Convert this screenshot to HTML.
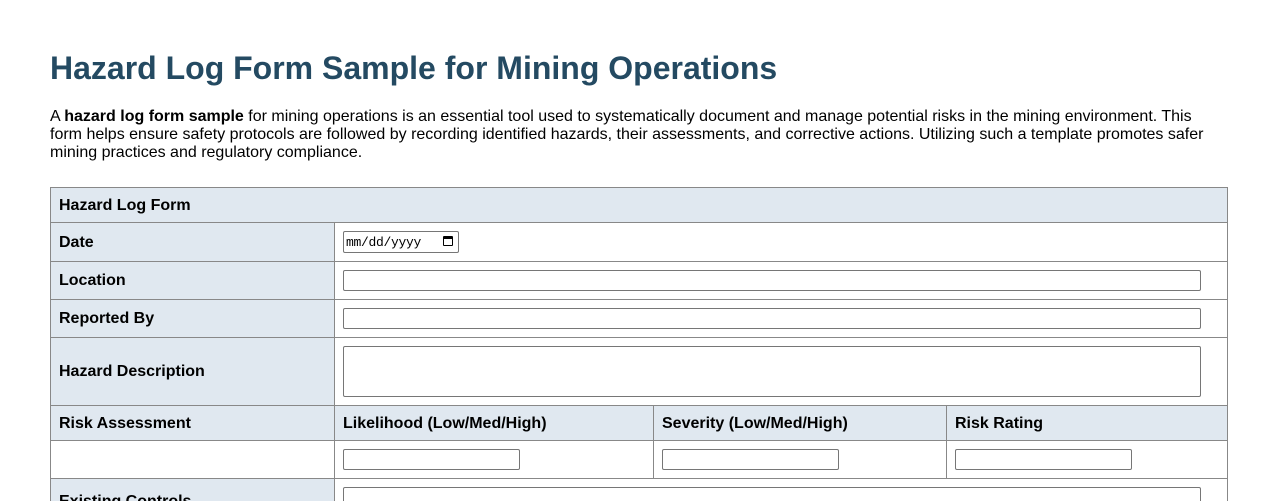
<!DOCTYPE html>
<html><head><meta charset="utf-8"><style>
html,body{margin:0;width:1278px;height:501px;overflow:hidden}
body{background:#fff;font-family:"Liberation Sans",Arial,sans-serif;position:relative}
h1{position:absolute;left:50px;top:48px;margin:0;font-size:32px;color:#244a62;font-weight:bold;line-height:40px}
p{position:absolute;left:50px;top:108px;width:1170px;margin:0;font-size:16px;line-height:18px;color:#000}
.c{position:absolute;box-sizing:border-box;border:1px solid #888;font-size:16px;font-weight:bold;color:#000}
.h{background:#e0e8f0}
.c span{position:absolute;left:8px}
.i{position:absolute;box-sizing:border-box;border:1px solid #767676;border-radius:2px;background:#fff}
</style></head><body>
<h1>Hazard Log Form Sample for Mining Operations</h1>
<p>A <b>hazard log form sample</b> for mining operations is an essential tool used to systematically document and manage potential risks in the mining environment. This form helps ensure safety protocols are followed by recording identified hazards, their assessments, and corrective actions. Utilizing such a template promotes safer mining practices and regulatory compliance.</p>

<div class="c h" style="left:50px;top:187px;width:1178px;height:36px"><span style="top:9px">Hazard Log Form</span></div>

<div class="c h" style="left:50px;top:222px;width:285px;height:40px"><span style="top:11px">Date</span></div>
<div class="c" style="left:334px;top:222px;width:894px;height:40px"></div>
<div class="i" style="left:343px;top:231px;width:116px;height:22px;font-family:'Liberation Mono',monospace;font-size:13px;padding:3px 0 0 2px;letter-spacing:-0.3px">mm/dd/yyyy<span style="position:absolute;right:5px;top:4px;width:10px;height:10px;border:1.5px solid #000;border-top-width:3px;border-radius:1px;box-sizing:border-box"></span></div>

<div class="c h" style="left:50px;top:261px;width:285px;height:39px"><span style="top:10px">Location</span></div>
<div class="c" style="left:334px;top:261px;width:894px;height:39px"></div>
<div class="i" style="left:343px;top:270px;width:858px;height:21px"></div>

<div class="c h" style="left:50px;top:299px;width:285px;height:39px"><span style="top:10px">Reported By</span></div>
<div class="c" style="left:334px;top:299px;width:894px;height:39px"></div>
<div class="i" style="left:343px;top:308px;width:858px;height:21px"></div>

<div class="c h" style="left:50px;top:337px;width:285px;height:69px"><span style="top:25px">Hazard Description</span></div>
<div class="c" style="left:334px;top:337px;width:894px;height:69px"></div>
<div class="i" style="left:343px;top:346px;width:858px;height:51px"></div>

<div class="c h" style="left:50px;top:405px;width:285px;height:36px"><span style="top:9px">Risk Assessment</span></div>
<div class="c h" style="left:334px;top:405px;width:320px;height:36px"><span style="top:9px">Likelihood (Low/Med/High)</span></div>
<div class="c h" style="left:653px;top:405px;width:294px;height:36px"><span style="top:9px">Severity (Low/Med/High)</span></div>
<div class="c h" style="left:946px;top:405px;width:282px;height:36px"><span style="top:9px">Risk Rating</span></div>

<div class="c" style="left:50px;top:440px;width:285px;height:39px"></div>
<div class="c" style="left:334px;top:440px;width:320px;height:39px"></div>
<div class="c" style="left:653px;top:440px;width:294px;height:39px"></div>
<div class="c" style="left:946px;top:440px;width:282px;height:39px"></div>
<div class="i" style="left:343px;top:449px;width:177px;height:21px"></div>
<div class="i" style="left:662px;top:449px;width:177px;height:21px"></div>
<div class="i" style="left:955px;top:449px;width:177px;height:21px"></div>

<div class="c h" style="left:50px;top:478px;width:285px;height:60px"><span style="top:14px">Existing Controls</span></div>
<div class="c" style="left:334px;top:478px;width:894px;height:60px"></div>
<div class="i" style="left:343px;top:487px;width:858px;height:40px"></div>
</body></html>
